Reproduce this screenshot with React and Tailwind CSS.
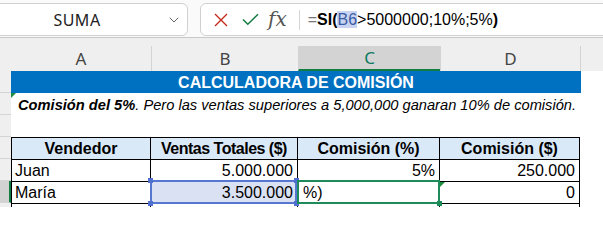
import React from "react";
import { ChevronDown } from "lucide-react";

const headers = [
  { label: "A", w: "w-[140px]" },
  { label: "B", w: "w-[147px]" },
  { label: "C", w: "w-[142px]", active: true },
  { label: "D", w: "w-[140px]" },
];

function RowHead({ active }) {
  return (
    <div
      className={
        "w-[11px] shrink-0 h-full border-b border-[#d4d4d4] " +
        (active ? "bg-[#d2d2d2] border-r-2 border-r-[#107c41]" : "bg-[#efefef]")
      }
    />
  );
}

function Tri() {
  return (
    <div className="absolute left-0 top-0 w-0 h-0 border-t-[5px] border-r-[5px] border-t-[#1e8e3e] border-r-transparent" />
  );
}

function Handle({ pos, color }) {
  return <div className={"absolute w-[5px] h-[5px] " + pos + " " + color} />;
}

export default function App() {
  const cell = "h-full border-t border-r border-black flex items-end pb-[1px] text-[16px] leading-[18px] text-black";

  return (
    <div className="w-[603px] h-[207px] overflow-hidden bg-white font-['Liberation_Sans',sans-serif]">
      {/* Name box + formula bar */}
      <div className="h-[37px] bg-[#fafafa] flex items-start pt-[3px] gap-[12px] font-['Noto_Sans',sans-serif]">
        <div className="-ml-[8px] w-[196px] h-[33px] bg-white border border-[#d0d0d0] rounded-[6px] flex items-center">
          <div className="w-[168px] text-center text-[16px] tracking-[0.5px] text-[#222]">SUMA</div>
          <div className="flex-1 flex justify-center">
            <ChevronDown size={16} strokeWidth={1.5} className="text-[#666]" />
          </div>
        </div>
        <div className="flex-1 -mr-2 h-[33px] bg-white border border-[#d0d0d0] rounded-[6px] flex items-center">
          <svg width="14" height="14" viewBox="0 0 14 14" className="ml-[13px]">
            <path d="M1 1 13 13M13 1 1 13" stroke="#c42b1c" strokeWidth="1.4" fill="none" />
          </svg>
          <svg width="17" height="13" viewBox="0 0 17 13" className="ml-[14px]">
            <path d="M1 6.5 5.8 11.3 16 1.2" stroke="#107c41" strokeWidth="1.5" fill="none" />
          </svg>
          <span className="ml-[9px] font-['DejaVu_Serif',serif] italic text-[20px] leading-none text-[#555] -mt-[2px]">
            fx
          </span>
          <div className="ml-[12px] w-px h-[20px] bg-[#d4d4d4]" />
          <div className="ml-[8px] text-[16px] text-black whitespace-nowrap font-['Liberation_Sans',sans-serif]">
            <span className="text-[#777]">=</span>
            <span className="font-bold">SI(</span>
            <span className="bg-[#c8d4f0] text-[#3b5ba5]">B6</span>
            <span>&gt;5000000;10%;5%</span>
            <span className="font-bold">)</span>
          </div>
        </div>
      </div>

      {/* Column headers */}
      <div className="h-[34px] bg-[#efefef] border-t border-[#c8c8c8] flex items-end">
        <div className="w-[11px] shrink-0" />
        {headers.map((h, i) => (
          <div
            key={h.label}
            className={
              h.w +
              " shrink-0 h-[25px] flex items-center justify-center text-[17px] font-['Noto_Sans',sans-serif] " +
              (i > 0 ? "border-l border-[#d4d4d4] " : "") +
              (h.active ? "bg-[#d3d3d3] text-[#0f7b5f] border-b-2 border-b-[#107c41]" : "text-[#444]")
            }
          >
            {h.label}
          </div>
        ))}
        <div className="flex-1 h-[25px] border-l border-[#d4d4d4]" />
      </div>

      {/* Row 1 */}
      <div className="h-[22px] flex">
        <RowHead />
        <div className="w-[570px] shrink-0 bg-[#0070c0] text-white font-bold text-[16px] leading-[18px] flex items-end justify-center pb-[1px]">
          CALCULADORA DE COMISIÓN
        </div>
      </div>

      {/* Row 2 */}
      <div className="h-[22px] flex">
        <RowHead />
        <div className="relative flex-1 flex items-end pl-[7px] pb-[1px] italic text-[14.67px] leading-[17px] text-black whitespace-nowrap">
          <Tri />
          <span className="font-bold">Comisión del 5%</span>
          <span>. Pero las ventas superiores a 5,000,000 ganaran 10% de comisión.</span>
        </div>
      </div>

      {/* Row 3 */}
      <div className="h-[22px] flex">
        <RowHead />
      </div>

      {/* Table header */}
      <div className="h-[22px] flex">
        <RowHead />
        {["Vendedor", "Ventas Totales ($)", "Comisión (%)", "Comisión ($)"].map((t, i) => (
          <div
            key={t}
            className={
              cell +
              " bg-[#dae9f8] font-bold justify-center " +
              headers[i].w +
              (i === 0 ? " border-l" : "") +
              (i === 1 ? " tracking-[-0.5px]" : "")
            }
          >
            {t}
          </div>
        ))}
      </div>

      {/* Juan */}
      <div className="h-[22px] flex">
        <RowHead />
        <div className={cell + " w-[140px] border-l pl-[3px]"}>Juan</div>
        <div className={cell + " w-[147px] justify-end pr-[4px]"}>5.000.000</div>
        <div className={cell + " w-[142px] justify-end pr-[4px]"}>5%</div>
        <div className={cell + " w-[140px] justify-end pr-[4px]"}>250.000</div>
      </div>

      {/* María */}
      <div className="h-[22px] flex">
        <RowHead active />
        <div className={cell + " w-[140px] border-l pl-[3px]"}>María</div>
        <div className={cell + " w-[147px] justify-end pr-[4px] relative bg-[#dae1f3]"}>
          3.500.000
          <div className="absolute -left-[1px] -top-[2px] right-0 -bottom-[1px] border-2 border-[#5677d1]" />
          <Handle pos="-left-[3px] -top-[4px]" color="bg-[#4f70cf]" />
          <Handle pos="-right-[2px] -top-[4px]" color="bg-[#4f70cf]" />
          <Handle pos="-left-[3px] -bottom-[3px]" color="bg-[#4f70cf]" />
          <Handle pos="-right-[2px] -bottom-[3px]" color="bg-[#4f70cf]" />
        </div>
        <div className={cell + " w-[142px] pl-[5px] relative"}>
          %)
          <div className="absolute -left-[1px] -top-[2px] -right-[1px] -bottom-[1px] border-2 border-[#1e8c5a]" />
          <Handle pos="-right-[3px] -bottom-[3px]" color="bg-[#1e8c5a]" />
        </div>
        <div className={cell + " w-[140px] justify-end pr-[4px] relative"}>
          <Tri />0
        </div>
      </div>

      {/* Row 7 */}
      <div className="h-[22px] flex">
        <RowHead />
        <div className="w-[140px] border-t border-l border-r border-black" />
        <div className="w-[147px] border-t border-r border-black" />
        <div className="w-[142px] border-t border-r border-black" />
        <div className="w-[140px] border-t border-r border-black" />
      </div>
    </div>
  );
}
